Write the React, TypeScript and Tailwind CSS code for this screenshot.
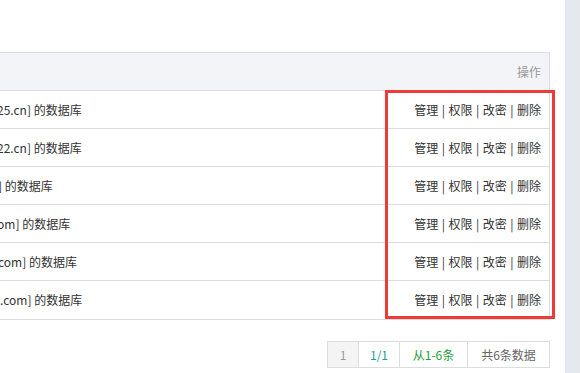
import React from 'react'

const rows = [
  { name: '25.cn] 的数据库', shift: '-ml-[3px]' },
  { name: '22.cn] 的数据库', shift: '-ml-[3px]' },
  { name: '] 的数据库', shift: '-ml-[2px]' },
  { name: 'om] 的数据库', shift: '-ml-[3px]' },
  { name: 'com] 的数据库', shift: '-ml-[2px]' },
  { name: '.com] 的数据库', shift: 'ml-0' },
]

const actions = ['管理', '权限', '改密', '删除']

export default function App() {
  return (
    <div
      className="relative flex w-[580px] h-[373px] overflow-hidden bg-white text-[12px] text-[#333]"
      style={{ fontFamily: '"Noto Sans CJK SC", "Noto Sans", sans-serif' }}
    >
      <main className="flex-1 pt-[52px] pr-[15px]">
        {/* table */}
        <div className="border-t border-r border-b border-[#dddddd]">
          <div className="flex items-center justify-end h-[38px] bg-[#f3f4f8] border-b border-[#dddddd] pr-[8px] text-[#999]">
            操作
          </div>
          {rows.map((r, i) => (
            <div
              key={i}
              className={`flex items-center h-[38px] ${i < rows.length - 1 ? 'border-b border-[#dddddd]' : ''}`}
            >
              <div className="flex-1 overflow-hidden whitespace-nowrap">
                <span className={`block ${r.shift}`}>{r.name}</span>
              </div>
              <div className="flex items-center gap-[2px] pr-[8px] whitespace-nowrap">
                {actions.map((a, j) => (
                  <React.Fragment key={a}>
                    {j > 0 && <span className="px-[1.5px]">|</span>}
                    <a className="cursor-pointer hover:text-[#1aa34a]">{a}</a>
                  </React.Fragment>
                ))}
              </div>
            </div>
          ))}
        </div>

        {/* pagination */}
        <div className="flex justify-end mt-[21px]">
          <div className="flex h-[27px] border border-[#dddddd]">
            <span className="flex items-center justify-center w-[30px] bg-[#f4f4f4] text-[#999]">1</span>
            <span className="flex items-center justify-center w-[41px] border-l border-[#dddddd] text-[#1a9f8f]">1/1</span>
            <span className="flex items-center justify-center w-[68px] border-l border-[#dddddd] text-[#22a03a]">从1-6条</span>
            <span className="flex items-center justify-center w-[82px] border-l border-[#dddddd] text-[#666]">共6条数据</span>
          </div>
        </div>
      </main>

      <aside className="w-[15px] bg-[#e5e8ed]" />

      {/* highlight */}
      <div className="absolute left-[385px] top-[90px] w-[170px] h-[229px] border-[3px] border-[#ef3a3a]" />
    </div>
  )
}
